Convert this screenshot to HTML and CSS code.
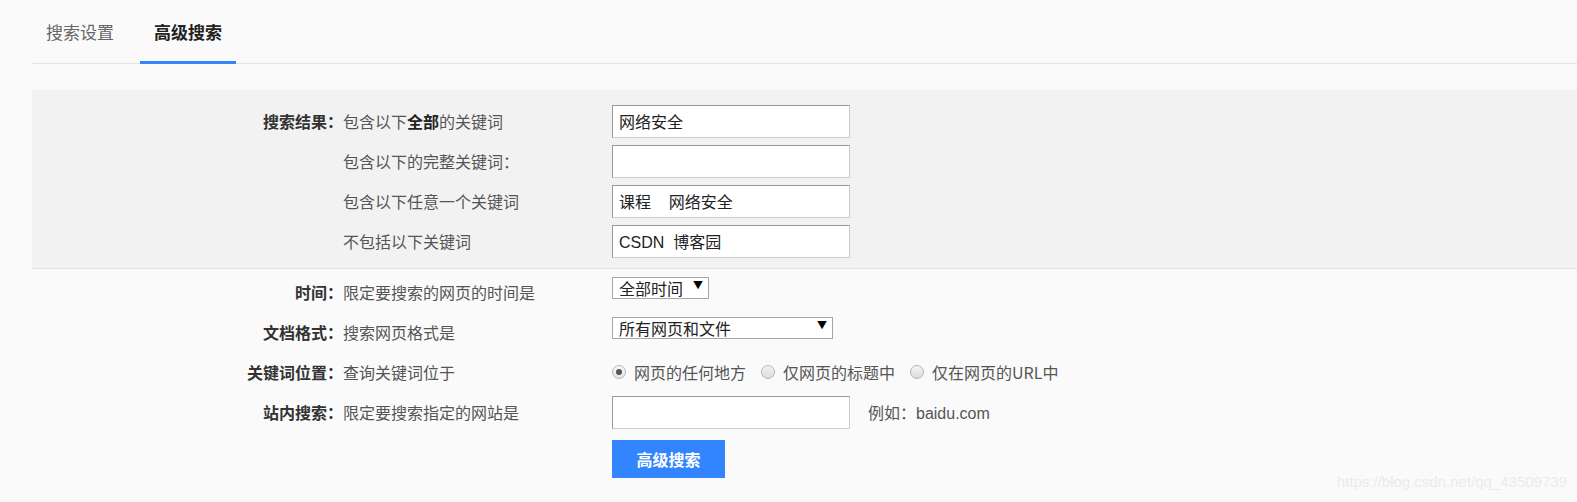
FILE: index.html
```html
<!DOCTYPE html>
<html lang="zh-CN">
<head>
<meta charset="utf-8">
<title>高级搜索</title>
<link rel="stylesheet" href="styles.css">
</head>
<body>
<div class="page">
  <nav class="tabs">
    <a class="tab">搜索设置</a>
    <a class="tab active">高级搜索</a>
  </nav>

  <section class="panel">
    <div class="row">
      <div class="label">搜索结果：</div>
      <div class="desc">包含以下<b>全部</b>的关键词</div>
      <input class="text" type="text" value="网络安全">
    </div>
    <div class="row">
      <div class="label"></div>
      <div class="desc">包含以下的完整关键词：</div>
      <input class="text" type="text" value="">
    </div>
    <div class="row">
      <div class="label"></div>
      <div class="desc">包含以下任意一个关键词</div>
      <input class="text" type="text" value="课程 &nbsp; &nbsp;网络安全">
    </div>
    <div class="row">
      <div class="label"></div>
      <div class="desc">不包括以下关键词</div>
      <input class="text" type="text" value="CSDN &nbsp;博客园">
    </div>
  </section>

  <section class="lower">
    <div class="row">
      <div class="label">时间：</div>
      <div class="desc">限定要搜索的网页的时间是</div>
      <div class="select short"><span>全部时间</span><span class="arrow">▼</span></div>
    </div>
    <div class="row">
      <div class="label">文档格式：</div>
      <div class="desc">搜索网页格式是</div>
      <div class="select long"><span>所有网页和文件</span><span class="arrow">▼</span></div>
    </div>
    <div class="row">
      <div class="label">关键词位置：</div>
      <div class="desc">查询关键词位于</div>
      <div class="radios">
        <label class="radio"><span class="dot checked"></span>网页的任何地方</label>
        <label class="radio"><span class="dot"></span>仅网页的标题中</label>
        <label class="radio"><span class="dot"></span>仅在网页的URL中</label>
      </div>
    </div>
    <div class="row">
      <div class="label">站内搜索：</div>
      <div class="desc">限定要搜索指定的网站是</div>
      <input class="text" type="text" value="">
      <span class="hint">例如：baidu.com</span>
    </div>
    <div class="btn-row">
      <button class="submit">高级搜索</button>
    </div>
  </section>
</div>
<div class="watermark">https://blog.csdn.net/qq_43509739</div>
</body>
</html>
```

FILE: styles.css
```css
html, body {
  margin: 0;
  padding: 0;
  background: #fafafa;
  height: 502px;
  overflow: hidden;
}
body {
  font-family: "Liberation Sans", "Noto Sans CJK SC", sans-serif;
  color: #333;
  position: relative;
}
.page {
  padding-left: 32px;
}
.tabs {
  display: flex;
  gap: 12px;
  height: 63px;
  border-bottom: 1px solid #e4e4e4;
}
.tab {
  display: block;
  padding: 0 14px;
  font-family: "Noto Sans CJK SC", sans-serif;
  font-size: 17px;
  line-height: 58px;
  height: 58px;
  margin-top: 3px;
  margin-bottom: -1px;
  color: #666;
  border-bottom: 3px solid transparent;
}
.tab.active {
  color: #222;
  font-weight: 700;
  border-bottom-color: #3385ff;
}
.panel {
  margin-top: 26px;
  background: #f2f2f2;
  border-bottom: 1px solid #e2e2e2;
  padding: 11px 0 7px;
}
.lower {
  padding-top: 3px;
}
.row {
  display: flex;
  align-items: center;
  height: 40px;
}
.label {
  width: 311px;
  flex: none;
  text-align: right;
  font-family: "Noto Sans CJK SC", sans-serif;
  font-size: 16px;
  font-weight: 700;
  color: #333;
  line-height: 20px;
}
.desc {
  width: 269px;
  flex: none;
  font-family: "Noto Sans CJK SC", sans-serif;
  font-size: 16px;
  color: #555;
  line-height: 20px;
}
.desc b {
  color: #222;
  font-weight: 700;
}
.text {
  box-sizing: border-box;
  width: 238px;
  height: 33px;
  margin: 0;
  padding: 0 6px;
  border: 1px solid #ccc;
  border-top-color: #9a9a9a;
  border-left-color: #9a9a9a;
  background: #fff;
  font-family: "Liberation Sans", "Noto Sans CJK SC", sans-serif;
  font-size: 16px;
  color: #222;
  outline: none;
}
.select {
  box-sizing: border-box;
  display: flex;
  justify-content: space-between;
  align-items: center;
  height: 22px;
  padding: 0 5px 0 6px;
  border: 1px solid #a6a6a6;
  background: #fff;
  font-family: "Noto Sans CJK SC", sans-serif;
  font-size: 16px;
  line-height: 20px;
  color: #222;
  margin-bottom: 9px;
}
.select.short { width: 97px; }
.select.long { width: 221px; }
.arrow {
  font-size: 10px;
  line-height: 10px;
  color: #000;
  margin-top: -5px;
}
.radios {
  display: flex;
  align-items: center;
  gap: 15px;
}
.radio {
  display: flex;
  align-items: center;
  gap: 8px;
  font-family: "Noto Sans CJK SC", sans-serif;
  font-size: 16px;
  line-height: 20px;
  color: #555;
}
.dot {
  box-sizing: border-box;
  width: 14px;
  height: 14px;
  border-radius: 50%;
  border: 1px solid #b5b5b5;
  background: linear-gradient(#f4f4f4, #dcdcdc);
  display: flex;
  align-items: center;
  justify-content: center;
}
.dot.checked {
  background: linear-gradient(#fafafa, #e4e4e4);
}
.dot.checked::after {
  content: "";
  width: 6px;
  height: 6px;
  border-radius: 50%;
  background: #555;
}
.hint {
  margin-left: 18px;
  font-family: "Liberation Sans", "Noto Sans CJK SC", sans-serif;
  font-size: 16px;
  color: #555;
}
.btn-row {
  padding-left: 580px;
  margin-top: 8px;
}
.submit {
  width: 113px;
  height: 38px;
  border: 0;
  margin: 0;
  background: #3385ff;
  color: #fff;
  font-family: "Noto Sans CJK SC", sans-serif;
  font-size: 16px;
  font-weight: 700;
  cursor: pointer;
}
.watermark {
  position: absolute;
  right: 10px;
  top: 473px;
  font-family: "Liberation Sans", sans-serif;
  font-size: 15px;
  color: #ebebeb;
}
```
